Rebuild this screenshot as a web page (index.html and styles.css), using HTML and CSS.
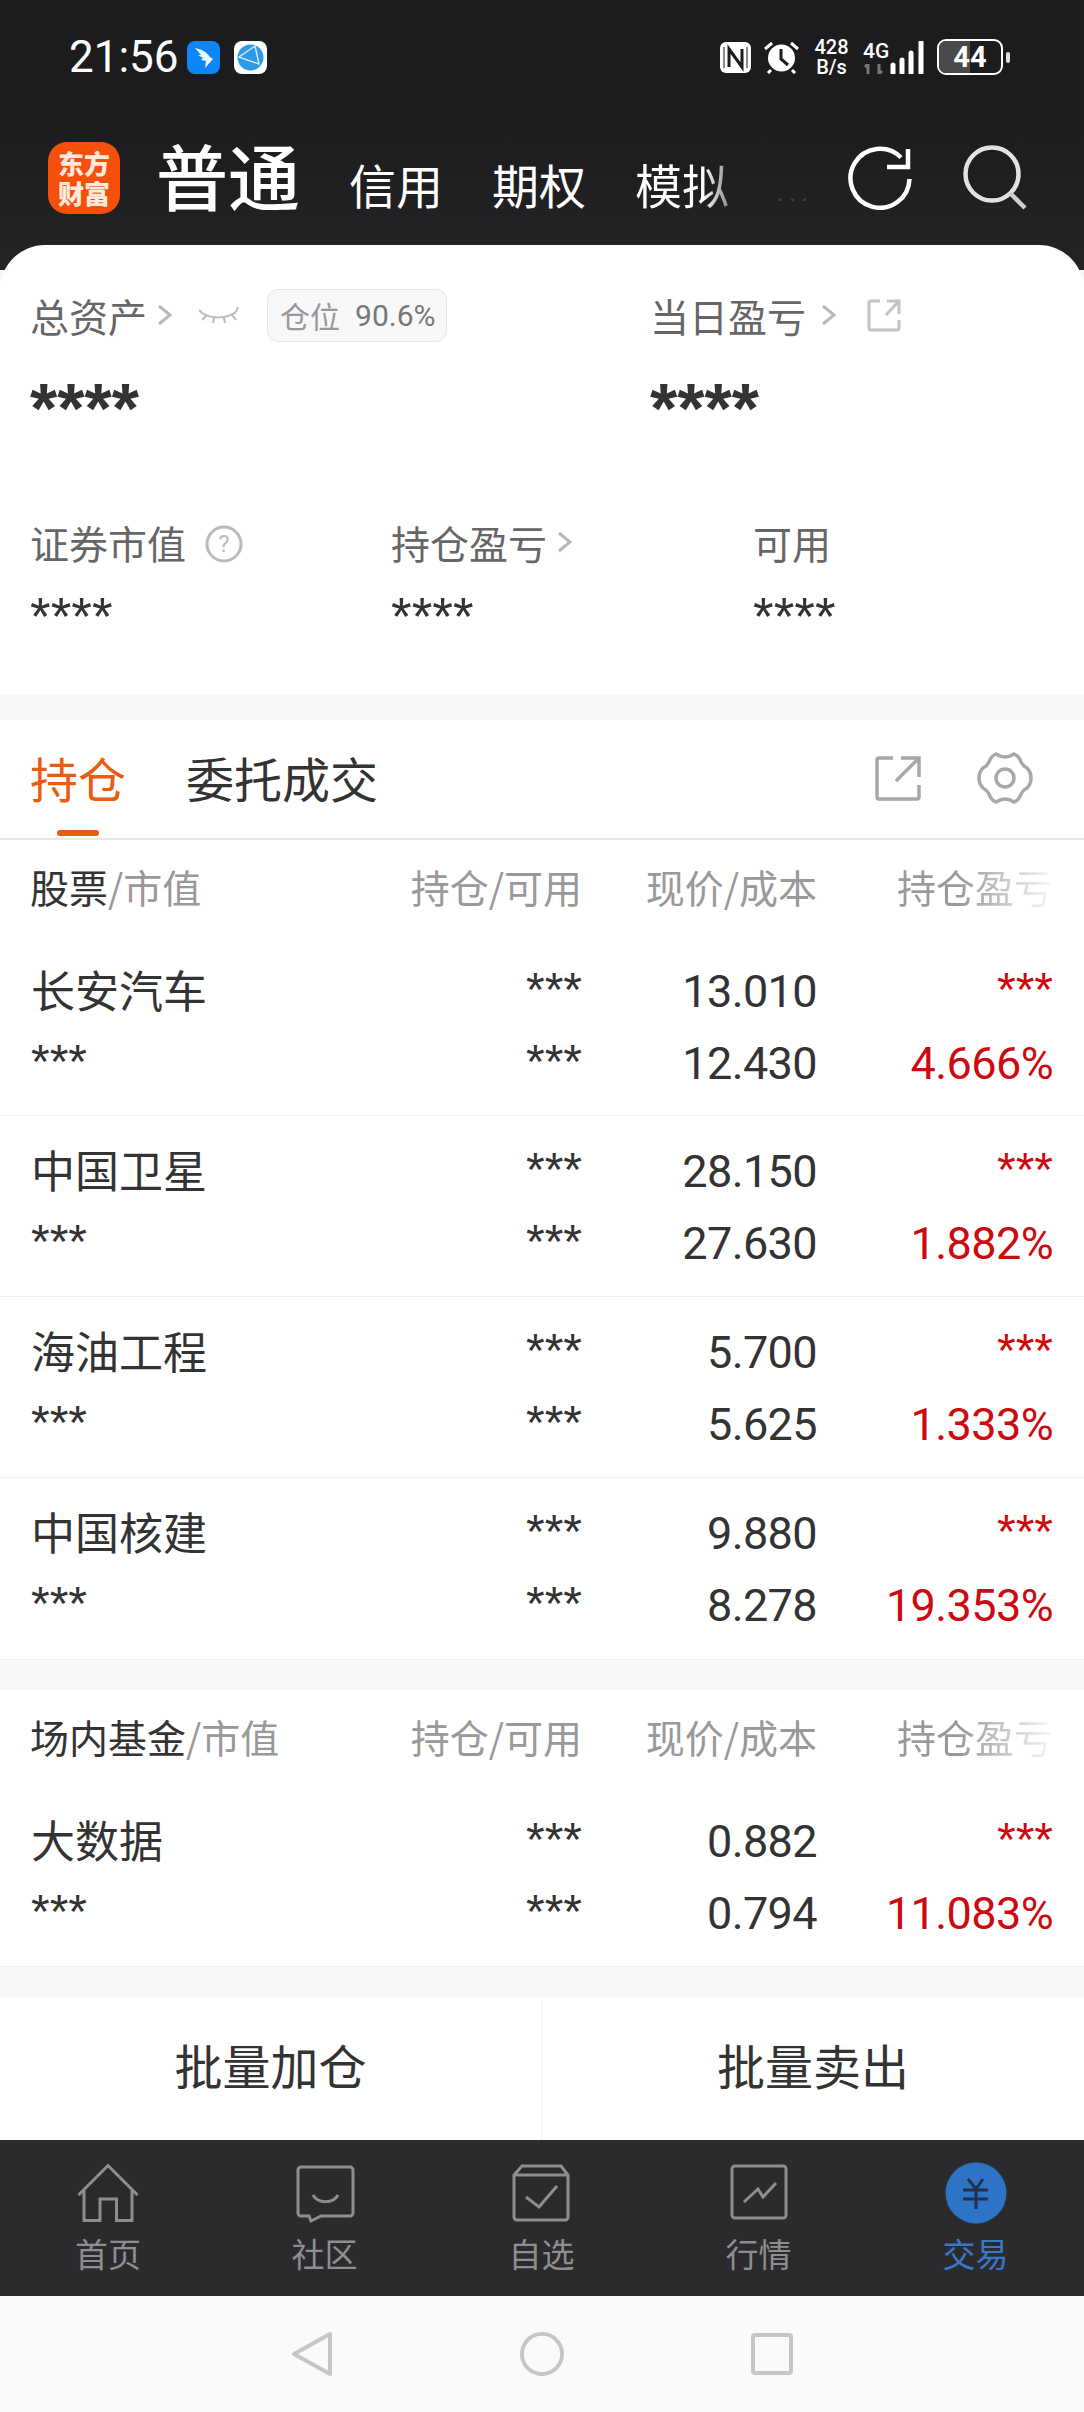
FILE: index.html
```html
<!DOCTYPE html>
<html lang="zh-CN">
<head>
    <meta charset="utf-8">
    <title>交易</title>
    <link rel="stylesheet" href="styles.css">
</head>
<body>
<div class="top">
    <div class="status">
        <span class="clock">21:56</span>
        <svg class="app-icon" viewBox="0 0 33 33"><rect width="33" height="33" rx="8" fill="#0f86f5"/><path d="M8 7c6 1 12 4 15 9l3 2-8 9 1-7-5-1 2-2-5-3 3 0z" fill="#e8f4ff"/></svg>
        <svg class="app-icon second" viewBox="0 0 33 33"><rect width="33" height="33" rx="8" fill="#fff"/><circle cx="16.500" cy="16.500" r="13" fill="#2f9be8"/><path d="M5 16l16-11 4 18-20-7zM21 5l4 18" fill="none" stroke="#dff2ff" stroke-width="1.300"/></svg>
        <span class="status-gap"></span>
        <svg class="nfc" viewBox="0 0 31 31"><rect width="31" height="31" rx="6" fill="#fff"/><path d="M9 25V7l13 18V7" fill="none" stroke="#1c1c1e" stroke-width="3"/><path d="M4 5v21M27 5v21" stroke="#1c1c1e" stroke-width="1"/></svg>
        <svg class="alarm" viewBox="0 0 37 33"><circle cx="18.500" cy="17" r="13.500" fill="#fff"/><path d="M18 8v10l7 6" fill="none" stroke="#1c1c1e" stroke-width="3"/><path d="M2 8l7-6M35 8l-7-6M8 29l-3 3M29 29l3 3" stroke="#fff" stroke-width="3"/></svg>
        <div class="speed"><span>428</span><span>B/s</span></div>
        <div class="net"><span>4G</span><svg viewBox="0 0 22 10"><path d="M5 0v10M2 3l3-3M16 0v10M19 7l-3 3" stroke="#777" stroke-width="3" fill="none"/></svg></div>
        <svg class="bars" viewBox="0 0 35 33"><path d="M3 24v8M12 19v13M21 12v20M31 1v31" stroke="#fff" stroke-width="5" stroke-linecap="round"/></svg>
        <div class="battery"><span class="battery-fill"></span><b>44</b></div>
        <span class="battery-nub"></span>
    </div>
    <div class="header">
        <div class="logo">东方<br>财富</div>
        <span class="mode">普通</span>
        <span class="mode-item">信用</span>
        <span class="mode-item">期权</span>
        <span class="mode-item fade">模拟</span>
        <span class="more">···</span>
        <svg class="refresh" viewBox="0 0 64 64"><path d="M61.500 33A29.500 29.500 0 1 1 53 11.500" fill="none" stroke="#fff" stroke-width="4.500"/><path d="M39 21h21V3" fill="none" stroke="#fff" stroke-width="4.500"/></svg>
        <svg class="search" viewBox="0 0 66 66"><circle cx="29" cy="29" r="26.500" fill="none" stroke="#e2e2e2" stroke-width="4.500"/><path d="M47 48l15 15" stroke="#cfcfcf" stroke-width="4.500"/></svg>
    </div>
</div>

<div class="summary">
    <div class="summary-top">
        <div class="total">
            <div class="label">总资产<svg class="chev" viewBox="0 0 15 22"><path d="M2 2l11 9-11 9" fill="none" stroke="#b8b8b8" stroke-width="3"/></svg>
                <svg class="eye" viewBox="0 0 40 20"><path d="M3 8C12 14 28 14 37 7M0 5l3 3M39 2l-2 5M8 10l-5 5M15 13l-1 5M25 13l1 5M33 10l4 5" fill="none" stroke="#bbb" stroke-width="2"/></svg>
                <span class="ratio"><span>仓位</span><span class="ratio-num">90.6%</span></span>
            </div>
            <div class="stars big">****</div>
        </div>
        <div class="today">
            <div class="label">当日盈亏<svg class="chev" viewBox="0 0 15 22"><path d="M2 2l11 9-11 9" fill="none" stroke="#b8b8b8" stroke-width="3"/></svg>
                <svg class="share-small" viewBox="0 0 34 34"><path d="M13 3H4a2 2 0 0 0-2 2v25a2 2 0 0 0 2 2h26a2 2 0 0 0 2-2V22M20 3h12v13M32 3L19 17" fill="none" stroke="#c4c4c4" stroke-width="3"/></svg>
            </div>
            <div class="stars big">****</div>
        </div>
    </div>
    <div class="summary-bottom">
        <div>
            <div class="label">证券市值
                <svg class="help" viewBox="0 0 38 38"><circle cx="19" cy="19" r="17" fill="none" stroke="#bbb" stroke-width="3"/><text x="19" y="27" text-anchor="middle" class="help-mark">?</text></svg>
            </div>
            <div class="stars small">****</div>
        </div>
        <div>
            <div class="label">持仓盈亏<svg class="chev" viewBox="0 0 15 22"><path d="M2 2l11 9-11 9" fill="none" stroke="#b8b8b8" stroke-width="3"/></svg></div>
            <div class="stars small">****</div>
        </div>
        <div>
            <div class="label">可用</div>
            <div class="stars small">****</div>
        </div>
    </div>
</div>

<div class="positions">
    <div class="tabs">
        <span class="tab active">持仓</span>
        <span class="tab">委托成交</span>
        <svg class="share" viewBox="0 0 46 46"><path d="M18 3H4a2 2 0 0 0-2 2v37a2 2 0 0 0 2 2h38a2 2 0 0 0 2-2V30M26 3h18v19M44 3L21 26" fill="none" stroke="#a8a8a8" stroke-width="3.500"/></svg>
        <svg class="gear" viewBox="0 0 56 54"><path d="M19 3Q28 9 37 3Q42 5 44 11Q46 15 50 17Q54 21 54 27Q54 33 50 37Q46 39 44 43Q42 49 37 51Q28 45 19 51Q14 49 12 43Q10 39 6 37Q2 33 2 27Q2 21 6 17Q10 15 12 11Q14 5 19 3Z" fill="none" stroke="#a8a8a8" stroke-width="3.500"/><circle cx="28" cy="27" r="9" fill="none" stroke="#a8a8a8" stroke-width="3.500"/></svg>
    </div>

    <div class="grid-row head">
        <span class="head-name"><em>股票</em>/市值</span>
        <span>持仓/可用</span>
        <span>现价/成本</span>
        <span class="head-fade">持仓盈亏</span>
    </div>
    <div class="grid-row stock">
        <span class="name">长安汽车</span><span class="mask">***</span><span class="num">13.010</span><span class="mask red">***</span>
        <span class="mask">***</span><span class="mask">***</span><span class="num">12.430</span><span class="num red">4.666%</span>
    </div>
    <div class="grid-row stock">
        <span class="name">中国卫星</span><span class="mask">***</span><span class="num">28.150</span><span class="mask red">***</span>
        <span class="mask">***</span><span class="mask">***</span><span class="num">27.630</span><span class="num red">1.882%</span>
    </div>
    <div class="grid-row stock">
        <span class="name">海油工程</span><span class="mask">***</span><span class="num">5.700</span><span class="mask red">***</span>
        <span class="mask">***</span><span class="mask">***</span><span class="num">5.625</span><span class="num red">1.333%</span>
    </div>
    <div class="grid-row stock">
        <span class="name">中国核建</span><span class="mask">***</span><span class="num">9.880</span><span class="mask red">***</span>
        <span class="mask">***</span><span class="mask">***</span><span class="num">8.278</span><span class="num red">19.353%</span>
    </div>
</div>

<div class="positions funds">
    <div class="grid-row head">
        <span class="head-name"><em>场内基金</em>/市值</span>
        <span>持仓/可用</span>
        <span>现价/成本</span>
        <span class="head-fade">持仓盈亏</span>
    </div>
    <div class="grid-row stock">
        <span class="name">大数据</span><span class="mask">***</span><span class="num">0.882</span><span class="mask red">***</span>
        <span class="mask">***</span><span class="mask">***</span><span class="num">0.794</span><span class="num red">11.083%</span>
    </div>
</div>

<div class="batch">
    <span>批量加仓</span>
    <span>批量卖出</span>
</div>

<nav class="tabbar">
    <div class="tabbar-item">
        <svg viewBox="0 0 62 60"><path d="M1.500 33L31 3.500 60.500 33M7 27V58.500H23V37H39.500V58.500H55V27" fill="none" stroke="#8e8e90" stroke-width="3"/></svg>
        <span>首页</span>
    </div>
    <div class="tabbar-item">
        <svg viewBox="0 0 62 60"><path d="M7 5H56a3 3 0 0 1 3 3V51a3 3 0 0 1-3 3H27L17 59 15 54H7a3 3 0 0 1-3-3V8a3 3 0 0 1 3-3Z" fill="none" stroke="#8e8e90" stroke-width="3"/><path d="M19 33C24 42 39 42 44 33" fill="none" stroke="#8e8e90" stroke-width="3"/></svg>
        <span>社区</span>
    </div>
    <div class="tabbar-item">
        <svg viewBox="0 0 62 60"><path d="M3 13L11 4H50L57 13V55a3 3 0 0 1-3 3H6a3 3 0 0 1-3-3ZM3 13H57M15 35L28 45 46 24" fill="none" stroke="#8e8e90" stroke-width="3"/></svg>
        <span>自选</span>
    </div>
    <div class="tabbar-item">
        <svg viewBox="0 0 62 60"><path d="M7 4H55a3 3 0 0 1 3 3V53a3 3 0 0 1-3 3H7a3 3 0 0 1-3-3V7a3 3 0 0 1 3-3ZM16 40L30 27 35 35 48 21" fill="none" stroke="#8e8e90" stroke-width="3"/></svg>
        <span>行情</span>
    </div>
    <div class="tabbar-item active">
        <svg viewBox="0 0 62 60"><circle cx="31" cy="31" r="30.500" fill="#2d73c6"/><path d="M23 17L31 27 38 17M18 28H43M18 37H43M31 27V47" fill="none" stroke="#24304a" stroke-width="3"/></svg>
        <span>交易</span>
    </div>
</nav>

<div class="sysnav">
    <svg viewBox="0 0 44 46"><path d="M40 3L4 23l36 20z" fill="none" stroke="#c6c6c6" stroke-width="4" stroke-linejoin="round"/></svg>
    <svg viewBox="0 0 46 46"><circle cx="23" cy="23" r="21" fill="none" stroke="#c6c6c6" stroke-width="4"/></svg>
    <svg viewBox="0 0 44 46"><rect x="3" y="4" width="38" height="38" rx="2" fill="none" stroke="#c6c6c6" stroke-width="4"/></svg>
</div>
</body>
</html>
```

FILE: styles.css
```css
html,body{
    margin: 0;
    padding: 0;
    background: #f6f7f9;
    font-family: "Noto Sans CJK SC", Roboto, sans-serif;
    color: #333;
}

/* top dark area */
.top{
    height: 270px;
    margin-bottom: -25px;
    background: linear-gradient(#1c1c1e, #1c1c1e 45%, #242426);
    color: #fff;
}
.status{
    display: flex;
    align-items: center;
    height: 114px;
    padding-left: 69px;
}
.clock{
    font-family: Roboto, sans-serif;
    font-size: 44px;
    width: 118px;
}
.app-icon{
    width: 33px;
    height: 33px;
}
.app-icon.second{
    margin-left: 14px;
}
.status-gap{
    flex: 1;
}
.nfc{
    width: 31px;
    height: 31px;
    margin-right: 12px;
}
.alarm{
    width: 37px;
    height: 33px;
    margin-right: 13px;
}
.speed{
    display: flex;
    flex-direction: column;
    align-items: center;
    width: 37px;
    font-family: Roboto, sans-serif;
    font-size: 20px;
    line-height: 20px;
    font-weight: 500;
    margin-right: 13px;
}
.net{
    display: flex;
    flex-direction: column;
    width: 27px;
    font-family: Roboto, sans-serif;
    font-size: 21px;
    line-height: 22px;
    font-weight: 500;
}
.net svg{
    width: 22px;
    height: 10px;
    margin-top: 2px;
}
.bars{
    width: 35px;
    height: 33px;
    margin-right: 12px;
}
.battery{
    position: relative;
    width: 62px;
    height: 32px;
    border: 2px solid #fff;
    border-radius: 9px;
    text-align: center;
    font-family: Roboto, sans-serif;
    font-size: 29px;
    line-height: 32px;
    overflow: hidden;
}
.battery b{
    position: relative;
}
.battery-fill{
    position: absolute;
    left: 0;
    top: 0;
    bottom: 0;
    width: 31px;
    background: #4a4a4d;
}
.battery-nub{
    width: 4px;
    height: 11px;
    margin: 0 74px 0 3px;
    background: #ddd;
    border-radius: 2px;
}
.header{
    display: flex;
    align-items: center;
    height: 128px;
    padding: 0 55px 0 48px;
    white-space: nowrap;
}
.logo{
    width: 72px;
    height: 72px;
    padding-top: 6px;
    box-sizing: border-box;
    border-radius: 19px;
    background: #f4500c;
    color: #ffe9dc;
    text-align: center;
    font-size: 26px;
    line-height: 30px;
    font-weight: 900;
    margin-right: 36px;
}
.mode{
    font-size: 72px;
    line-height: 80px;
    font-weight: 500;
    margin: -8px 49px 0 0;
}
.mode-item{
    font-size: 47px;
    line-height: 60px;
    margin: 12px 49px 0 0;
}
.mode-item.fade{
    margin-right: 0;
    background: linear-gradient(90deg, #fff 72%, #8a8a8a);
    -webkit-background-clip: text;
    background-clip: text;
    color: transparent;
}
.more{
    margin: 44px 0 0 48px;
    color: #444;
    font-family: Roboto, sans-serif;
    font-size: 24px;
    letter-spacing: 6px;
}
.refresh{
    flex: none;
    width: 64px;
    height: 64px;
    margin: 0 51px 0 auto;
}
.search{
    flex: none;
    width: 66px;
    height: 66px;
}

/* summary card */
.summary{
    position: relative;
    background: #fff;
    border-radius: 45px 45px 0 0;
    height: 450px;
    padding: 0 0 0 30px;
    box-sizing: border-box;
}
.summary-top{
    display: flex;
    padding-top: 45px;
    height: 232px;
    box-sizing: border-box;
}
.total{
    width: 620px;
}
.label{
    display: flex;
    align-items: center;
    height: 50px;
    font-size: 39px;
    color: #666;
}
.chev{
    width: 15px;
    height: 22px;
    margin-left: 10px;
}
.today .chev{
    margin-left: 15px;
}
.eye{
    width: 40px;
    height: 20px;
    margin-left: 27px;
}
.ratio{
    display: flex;
    align-items: center;
    gap: 15px;
    margin-left: 28px;
    padding-left: 12px;
    width: 180px;
    height: 53px;
    box-sizing: border-box;
    font-size: 30px;
    color: #999;
    background: #f7f8fa;
    border: 1px solid #e4e5e8;
    border-radius: 11px;
    white-space: nowrap;
}
.ratio-num{
    font-family: Roboto, sans-serif;
    font-size: 30px;
    color: #777;
}
.share-small{
    width: 34px;
    height: 34px;
    margin-left: 31px;
}
.stars{
    font-family: "Liberation Sans", sans-serif;
    color: #333;
}
.stars.big{
    font-size: 70px;
    line-height: 70px;
    font-weight: bold;
    margin-top: 34px;
}
.stars.small{
    font-size: 53px;
    line-height: 53px;
    margin-top: 23px;
}
.summary-bottom{
    display: grid;
    grid-template-columns: 361px 362px 1fr;
    padding-top: 40px;
}
.help{
    width: 38px;
    height: 38px;
    margin: 3px 0 0 19px;
}
.help-mark{
    font-family: Roboto, sans-serif;
    font-size: 24px;
    fill: #bbb;
}

/* holdings */
.positions{
    background: #fff;
    margin-top: 25px;
    border-bottom: 1px solid #efefef;
}
.funds{
    margin-top: 30px;
}
.tabs{
    display: flex;
    align-items: center;
    height: 120px;
    padding: 0 51px 0 30px;
    border-bottom: 2px solid #e6e6e6;
    box-sizing: border-box;
}
.tab{
    position: relative;
    font-size: 48px;
    line-height: 60px;
    margin: -4px 60px 0 0;
}
.tab.active{
    color: #ea5a0f;
}
.tab.active::after{
    content: "";
    position: absolute;
    left: 27px;
    bottom: -29px;
    width: 42px;
    height: 6px;
    border-radius: 3px;
    background: #ea5a0f;
}
.share{
    width: 46px;
    height: 46px;
    margin-left: auto;
    margin-top: -3px;
}
.gear{
    width: 56px;
    height: 54px;
    margin: -3px 0 0 56px;
}
.grid-row{
    display: grid;
    grid-template-columns: 1fr 200px 235px 236px;
    padding: 0 31px;
    text-align: right;
}
.grid-row .name,
.grid-row > span:first-child,
.grid-row > span:nth-child(5){
    text-align: left;
}
.head{
    align-items: center;
    height: 96px;
    padding-left: 30px;
    padding-bottom: 4px;
    box-sizing: border-box;
    font-size: 39px;
    color: #999;
}
.head-name em{
    font-style: normal;
    color: #333;
}
.head > span{
    white-space: nowrap;
}
.head-fade{
    background: linear-gradient(90deg, #999 60%, #f4f4f4 98%);
    -webkit-background-clip: text;
    background-clip: text;
    color: transparent;
}
.stock{
    grid-auto-rows: 72px;
    align-items: center;
    padding-top: 18px;
    height: 181px;
    box-sizing: border-box;
    border-bottom: 1px solid #efefef;
}
.head + .stock{
    height: 180px;
}
.stock:last-child{
    border-bottom: none;
}
.name{
    font-size: 44px;
    line-height: 60px;
    margin-top: -2px;
}
.num{
    font-family: Roboto, sans-serif;
    font-size: 45px;
    letter-spacing: -0.6px;
    line-height: 60px;
    margin-top: 4px;
}
.mask{
    font-family: "Liberation Sans", sans-serif;
    font-size: 48px;
    line-height: 50px;
}
.red{
    color: #cc0a0f;
}

/* batch buttons */
.batch{
    display: grid;
    grid-template-columns: 1fr 1fr;
    height: 143px;
    margin-top: 30px;
    background: #fff;
    font-size: 48px;
    color: #333;
}
.batch span{
    display: flex;
    align-items: center;
    justify-content: center;
    padding-bottom: 10px;
}
.batch span:first-child{
    border-right: 1px solid #f0f0f0;
}

/* bottom navigation */
.tabbar{
    display: grid;
    grid-template-columns: 216px 217px 217px 217px 217px;
    height: 156px;
    background: #2b2b2d;
}
.tabbar-item{
    display: flex;
    flex-direction: column;
    align-items: center;
    padding-top: 22px;
    color: #8e8e90;
    font-size: 33px;
    line-height: 44px;
}
.tabbar-item svg{
    width: 62px;
    height: 60px;
    margin-bottom: 9px;
    overflow: visible;
}
.tabbar-item.active{
    color: #3878c8;
}
.sysnav{
    display: flex;
    align-items: center;
    justify-content: center;
    gap: 186px;
    height: 116px;
    background: #fafafa;
}
.sysnav svg{
    width: 44px;
    height: 46px;
}
```
